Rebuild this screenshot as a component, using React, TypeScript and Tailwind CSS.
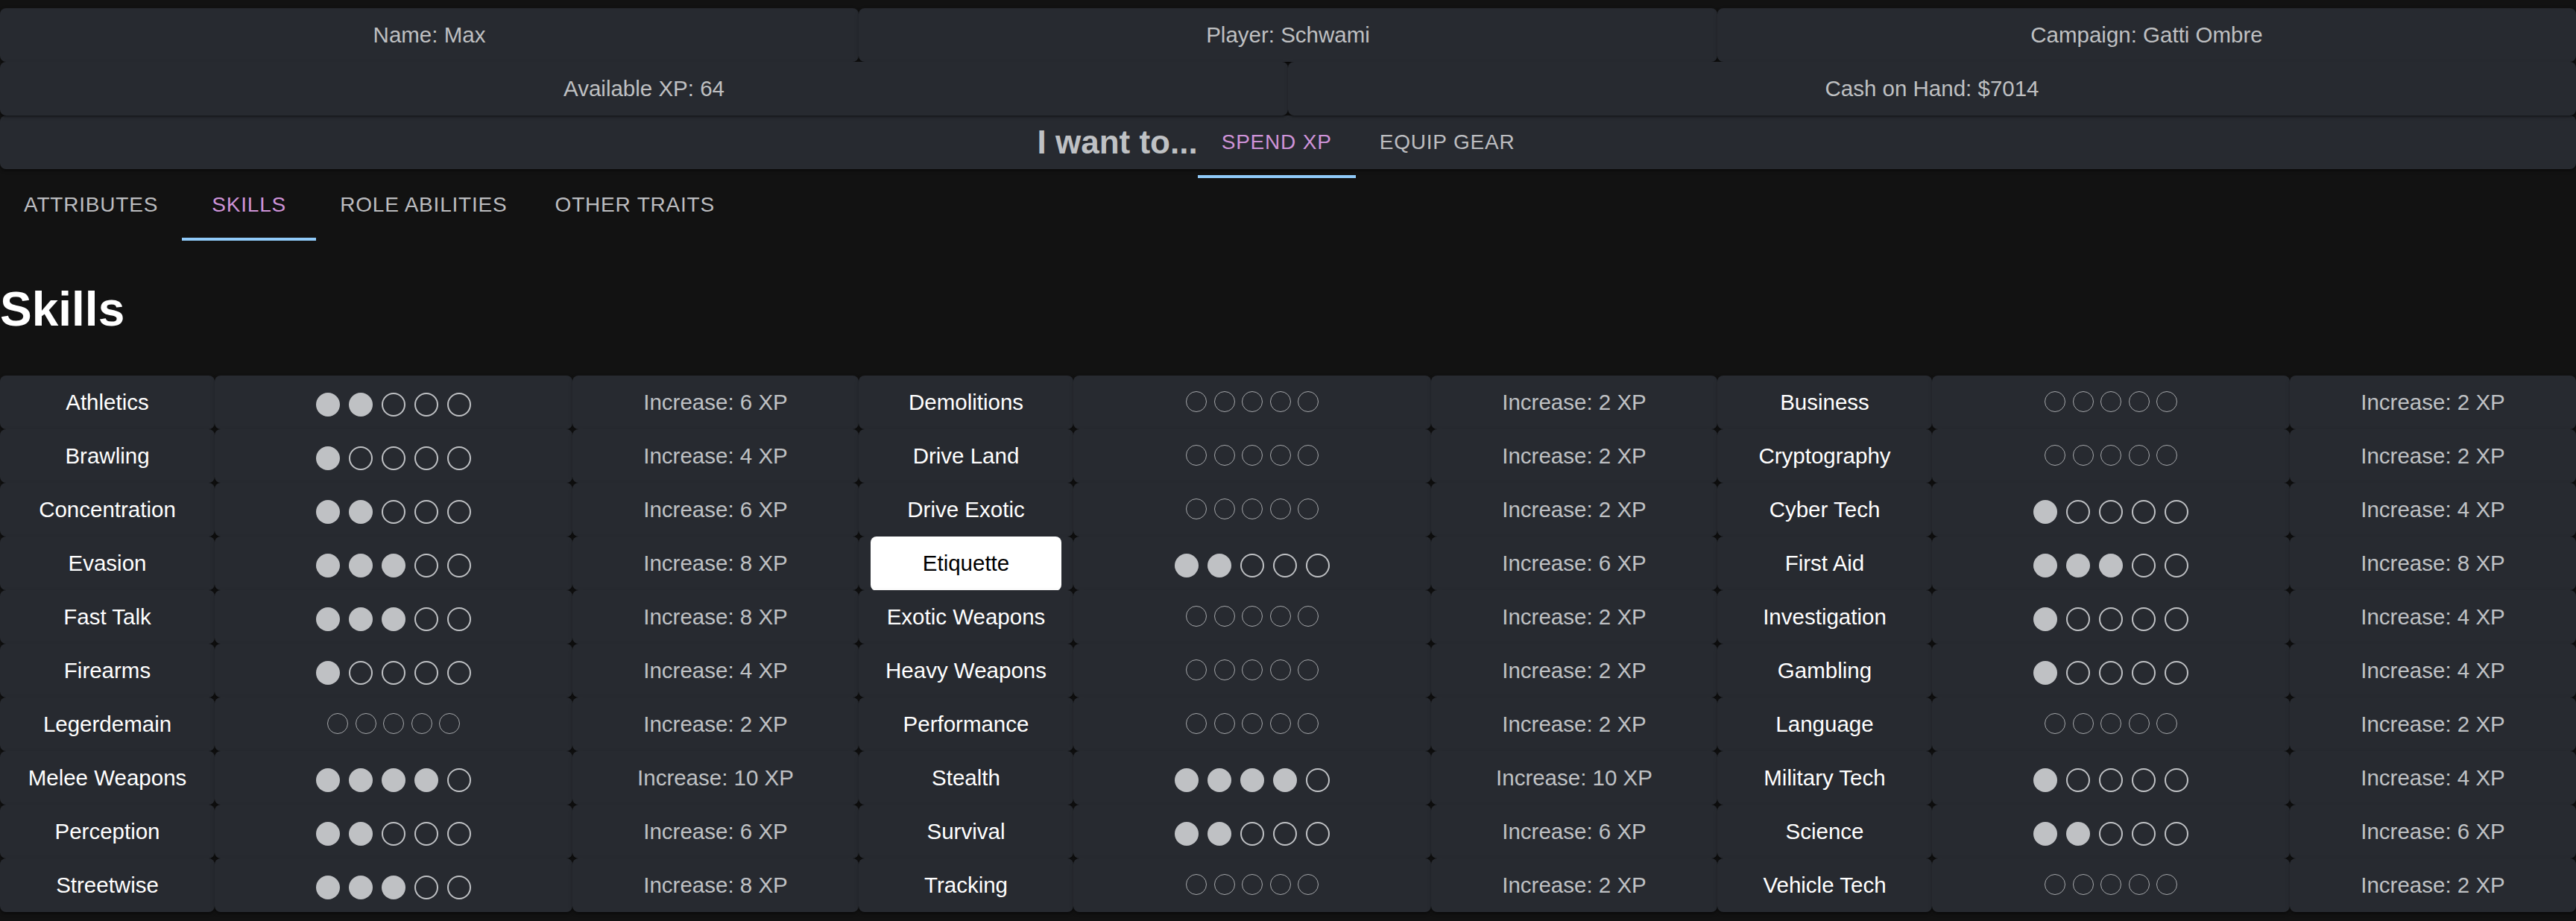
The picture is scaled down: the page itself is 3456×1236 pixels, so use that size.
import type { ReactNode } from "react";

type Skill = { name: string; level: number; cost: number };

const sections: Skill[][] = [
  [
    { name: "Athletics", level: 2, cost: 6 },
    { name: "Brawling", level: 1, cost: 4 },
    { name: "Concentration", level: 2, cost: 6 },
    { name: "Evasion", level: 3, cost: 8 },
    { name: "Fast Talk", level: 3, cost: 8 },
    { name: "Firearms", level: 1, cost: 4 },
    { name: "Legerdemain", level: 0, cost: 2 },
    { name: "Melee Weapons", level: 4, cost: 10 },
    { name: "Perception", level: 2, cost: 6 },
    { name: "Streetwise", level: 3, cost: 8 },
  ],
  [
    { name: "Demolitions", level: 0, cost: 2 },
    { name: "Drive Land", level: 0, cost: 2 },
    { name: "Drive Exotic", level: 0, cost: 2 },
    { name: "Etiquette", level: 2, cost: 6 },
    { name: "Exotic Weapons", level: 0, cost: 2 },
    { name: "Heavy Weapons", level: 0, cost: 2 },
    { name: "Performance", level: 0, cost: 2 },
    { name: "Stealth", level: 4, cost: 10 },
    { name: "Survival", level: 2, cost: 6 },
    { name: "Tracking", level: 0, cost: 2 },
  ],
  [
    { name: "Business", level: 0, cost: 2 },
    { name: "Cryptography", level: 0, cost: 2 },
    { name: "Cyber Tech", level: 1, cost: 4 },
    { name: "First Aid", level: 3, cost: 8 },
    { name: "Investigation", level: 1, cost: 4 },
    { name: "Gambling", level: 1, cost: 4 },
    { name: "Language", level: 0, cost: 2 },
    { name: "Military Tech", level: 1, cost: 4 },
    { name: "Science", level: 2, cost: 6 },
    { name: "Vehicle Tech", level: 0, cost: 2 },
  ],
];

const subTabs = ["ATTRIBUTES", "SKILLS", "ROLE ABILITIES", "OTHER TRAITS"];

const paper =
  "rounded-[8px] bg-[#272a30] shadow-[0_4px_2px_-2px_rgba(0,0,0,0.2),0_2px_2px_0_rgba(0,0,0,0.14),0_2px_6px_0_rgba(0,0,0,0.12)]";

function Cell({ children, className = "" }: { children?: ReactNode; className?: string }) {
  return (
    <div className={`${paper} flex h-[72px] items-center justify-center ${className}`}>
      {children}
    </div>
  );
}

function Tab({ label, active }: { label: string; active?: boolean }) {
  return (
    <div className="flex h-[96px] min-w-[180px] flex-col items-center px-[32px] pt-[4px]">
      <div
        className={`flex flex-1 items-center text-[28px] uppercase tracking-[0.02857em] ${
          active ? "text-[#ce93d8]" : "text-[#bcbdc0]"
        }`}
      >
        {label}
      </div>
      <div className={`-mx-[32px] h-[4px] self-stretch ${active ? "bg-[#90caf9]" : ""}`} />
    </div>
  );
}

function Dots({ level }: { level: number }) {
  if (level === 0) {
    return (
      <div className="flex gap-[9.5px] pb-[3px]">
        {[0, 1, 2, 3, 4].map((i) => (
          <span
            key={i}
            className="h-[28px] w-[28px] rounded-full border-[1.5px] border-[#a4a6a9]"
          />
        ))}
      </div>
    );
  }
  return (
    <div className="flex gap-[12px] pt-[5px]">
      {[0, 1, 2, 3, 4].map((i) =>
        i < level ? (
          <span key={i} className="h-[32px] w-[32px] rounded-full bg-[#bfc1c4]" />
        ) : (
          <span
            key={i}
            className="h-[32px] w-[32px] rounded-full border-[2.6px] border-[#bfc1c4]"
          />
        ),
      )}
    </div>
  );
}

function SkillSection({ skills }: { skills: Skill[] }) {
  return (
    <div className="grid grid-cols-[3fr_5fr_4fr]">
      {skills.map((skill) => (
        <div key={skill.name} className="contents">
          <Cell>
            {skill.name === "Etiquette" ? (
              <div className="mx-[16px] flex h-[73px] flex-1 items-center justify-center rounded-[8px] bg-white text-black">
                {skill.name}
              </div>
            ) : (
              <span className="text-white">{skill.name}</span>
            )}
          </Cell>
          <Cell>
            <Dots level={skill.level} />
          </Cell>
          <Cell className="text-[#bfc1c4]">Increase: {skill.cost} XP</Cell>
        </div>
      ))}
    </div>
  );
}

export default function App() {
  return (
    <div className="min-h-screen bg-[#121212] pt-[11px] font-['Liberation_Sans',Arial,sans-serif] text-[29.5px]">
      <div className="grid grid-cols-3 text-[#bfc0c2]">
        <Cell>Name: Max</Cell>
        <Cell>Player: Schwami</Cell>
        <Cell>Campaign: Gatti Ombre</Cell>
      </div>
      <div className="grid grid-cols-2 text-[#bfc0c2]">
        <Cell>Available XP: 64</Cell>
        <Cell>Cash on Hand: $7014</Cell>
      </div>
      <Cell>
        <div className="flex h-[96px] items-center">
          <h5 className="text-[44px] font-bold leading-none text-[#bfc1c4]">I want to...</h5>
          <Tab label="Spend XP" active />
          <Tab label="Equip Gear" />
        </div>
      </Cell>

      <div className="flex">
        {subTabs.map((tab) => (
          <Tab key={tab} label={tab} active={tab === "SKILLS"} />
        ))}
      </div>

      <h1 className="mt-[56px] mb-[53px] text-[64px] font-bold leading-[72px] text-white">Skills</h1>

      <div className="grid grid-cols-3">
        {sections.map((skills, i) => (
          <SkillSection key={i} skills={skills} />
        ))}
      </div>
    </div>
  );
}
